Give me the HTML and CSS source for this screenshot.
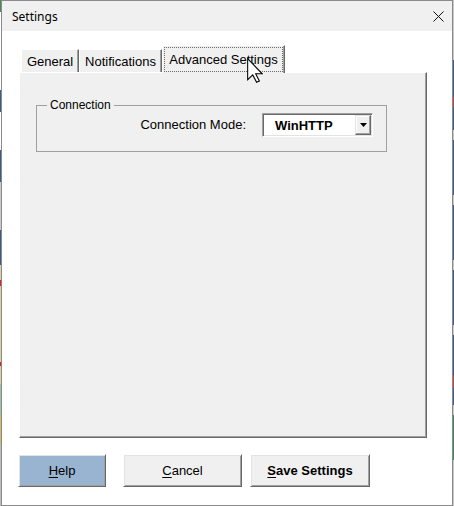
FILE: index.html
```html
<!DOCTYPE html>
<html lang="en">
<head>
<meta charset="utf-8">
<title>Settings</title>
<link rel="stylesheet" href="styles.css">
</head>
<body>
<div class="strip strip-left"></div>
<div class="window">
  <div class="titlebar">
    <span class="title">Settings</span>
    <svg class="close" width="11" height="11" viewBox="0 0 11 11" aria-label="Close">
      <path d="M0.5 0.5 L10.5 10.5 M10.5 0.5 L0.5 10.5" stroke="#111" stroke-width="1" fill="none"/>
    </svg>
  </div>
  <div class="client">
    <div class="tabs">
      <div class="tab tab-general">General</div>
      <div class="tab tab-notif">Notifications</div>
      <div class="tab tab-active"><span class="focus">Advanced Settings</span></div>
    </div>
    <div class="panel">
      <fieldset class="group">
        <legend class="group-title">Connection</legend>
        <div class="row">
          <span class="label">Connection Mode:</span>
          <div class="combo">
            <span class="combo-value">WinHTTP</span>
            <span class="combo-btn">
              <svg width="7" height="4" viewBox="0 0 7 4"><path d="M0 0 H7 L3.5 4 Z" fill="#000"/></svg>
            </span>
          </div>
        </div>
      </fieldset>
    </div>
    <div class="buttons">
      <div class="btn btn-help"><span><u>H</u>elp</span></div>
      <div class="btn btn-cancel"><span><u>C</u>ancel</span></div>
      <div class="btn btn-save"><span><u>S</u>ave Settings</span></div>
    </div>
  </div>
  <svg class="cursor" width="16" height="25" viewBox="0 0 12 19" preserveAspectRatio="none">
    <path d="M0.5 0.5 L0.5 16.5 L4.3 12.9 L7.2 18.4 L9.3 17.4 L6.5 12 L11.4 12 Z" fill="#fff" stroke="#000" stroke-width="0.8" stroke-linejoin="miter"/>
  </svg>
</div>
<div class="strip strip-right"></div>
</body>
</html>
```

FILE: styles.css
```css
* {
  box-sizing: border-box;
}

html, body {
  margin: 0;
  padding: 0;
}

body {
  width: 454px;
  height: 506px;
  display: flex;
  background: #ffffff;
  font-family: "Liberation Sans", Arial, sans-serif;
  font-size: 13px;
  color: #000;
  overflow: hidden;
}

.strip {
  width: 1px;
  height: 506px;
  flex: none;
}

.strip-left {
  background: linear-gradient(to bottom,
    #4a8a5a 0px, #4a8a5a 12px,
    #ffffff 12px, #ffffff 90px,
    #3b5a92 90px, #3b5a92 112px,
    #ffffff 112px, #ffffff 150px,
    #3b5a92 150px, #3b5a92 182px,
    #c9c9c9 182px, #c9c9c9 230px,
    #3b5a92 230px, #3b5a92 265px,
    #d8d3a6 265px, #d8d3a6 280px,
    #e02020 280px, #e02020 286px,
    #d8d3a6 286px, #d8d3a6 362px,
    #e02020 362px, #e02020 366px,
    #d8d3a6 366px, #d8d3a6 384px,
    #9cc4a8 384px, #9cc4a8 414px,
    #d4b96b 414px, #d4b96b 445px,
    #bdbdbd 445px, #bdbdbd 506px);
}

.strip-right {
  background: linear-gradient(to bottom,
    #c8c8c8 0px, #c8c8c8 60px,
    #3b5a92 60px, #3b5a92 97px,
    #c04040 97px, #c04040 107px,
    #3b5a92 107px, #3b5a92 130px,
    #c8c8c8 130px, #c8c8c8 140px,
    #3b5a92 140px, #3b5a92 195px,
    #c8c8c8 195px, #c8c8c8 205px,
    #3b5a92 205px, #3b5a92 260px,
    #c8c8c8 260px, #c8c8c8 270px,
    #3b5a92 270px, #3b5a92 325px,
    #c8c8c8 325px, #c8c8c8 335px,
    #3b5a92 335px, #3b5a92 375px,
    #c04040 375px, #c04040 388px,
    #3b5a92 388px, #3b5a92 405px,
    #c8c8c8 405px, #c8c8c8 415px,
    #3b8a5a 415px, #3b8a5a 460px,
    #c8c8c8 460px, #c8c8c8 506px);
}

.window {
  position: relative;
  width: 452px;
  height: 506px;
  flex: none;
  border: 1px solid #8a8a8a;
  background: #ffffff;
  display: flex;
  flex-direction: column;
}

.titlebar {
  height: 30px;
  flex: none;
  background: #f0f0f0;
  display: flex;
  align-items: center;
  justify-content: space-between;
  padding: 1px 8px 0 10px;
}

.title {
  font-family: "Noto Sans", "Segoe UI", sans-serif;
  font-size: 12px;
  color: #000;
}

.close {
  display: block;
}

.client {
  flex: 1;
  display: flex;
  flex-direction: column;
}

.tabs {
  position: relative;
  z-index: 1;
  display: flex;
  align-items: flex-end;
  height: 27px;
  margin: 14px 0 0 19px;
}

.tab {
  height: 23px;
  display: flex;
  align-items: center;
  justify-content: center;
  background: #f0f0f0;
  border-left: 1px solid #ffffff;
  border-top: 1px solid #ffffff;
  border-right: 1px solid #696969;
  box-shadow: inset -1px 0 0 #a0a0a0;
  white-space: nowrap;
  padding-top: 1px;
}

.tab-general {
  width: 58px;
}

.tab-notif {
  width: 83px;
}

.tab-active {
  width: 123px;
  height: 28px;
  margin-bottom: -1px;
  align-items: stretch;
  padding: 0;
}

.focus {
  flex: 1;
  display: flex;
  align-items: center;
  justify-content: center;
  margin: 1px 1px 1px 1px;
  border: 1px dotted #6a6a6a;
  padding-bottom: 1px;
}

.panel {
  width: 408px;
  height: 366px;
  margin-left: 17px;
  background: #f0f0f0;
  border-top: 1px solid #ffffff;
  border-left: 1px solid #ffffff;
  border-right: 1px solid #696969;
  border-bottom: 1px solid #696969;
  box-shadow: inset -1px -1px 0 #a0a0a0;
  display: flex;
  flex-direction: column;
  align-items: flex-start;
}

.group {
  width: 351px;
  min-width: 0;
  margin: 25px 0 0 16px;
  padding: 1px 13px 14px 0;
  border: 1px solid #a0a0a0;
}

.group-title {
  font-size: 12px;
  line-height: 14px;
  margin-left: 10px;
  padding: 0 3px;
}

.row {
  display: flex;
  justify-content: flex-end;
  align-items: center;
  gap: 16px;
}

.label {
  white-space: nowrap;
  padding-bottom: 2px;
}

.combo {
  width: 111px;
  height: 24px;
  display: flex;
  align-items: center;
  background: #ffffff;
  border: 1px solid;
  border-color: #a0a0a0 #ffffff #ffffff #a0a0a0;
  box-shadow: inset 1px 1px 0 #696969, inset -1px -1px 0 #e3e3e3;
  padding: 1px 1px 1px 12px;
}

.combo-value {
  font-weight: bold;
  flex: 1;
}

.combo-btn {
  width: 16px;
  height: 20px;
  display: flex;
  align-items: center;
  justify-content: center;
  background: #f0f0f0;
  border: 1px solid;
  border-color: #e3e3e3 #696969 #696969 #e3e3e3;
  box-shadow: inset -1px -1px 0 #a0a0a0, inset 1px 1px 0 #ffffff;
}

.combo-btn svg {
  display: block;
}

.buttons {
  display: flex;
  margin: 16px 0 0 16px;
}

.btn {
  height: 33px;
  display: flex;
  align-items: center;
  justify-content: center;
  background: #f0f0f0;
  border: 1px solid;
  border-color: #ffffff #696969 #696969 #ffffff;
  box-shadow: inset 1px 1px 0 #e3e3e3, inset -1px -1px 0 #a0a0a0;
  white-space: nowrap;
}

.btn u {
  text-decoration: underline;
  text-underline-offset: 2px;
}

.btn-help {
  width: 88px;
  background: #99b4d1;
}

.btn-cancel {
  width: 119px;
  margin-left: 17px;
}

.btn-save {
  width: 120px;
  margin-left: 8px;
  font-weight: bold;
}

.cursor {
  position: absolute;
  left: 245px;
  top: 57px;
  z-index: 5;
}
```
